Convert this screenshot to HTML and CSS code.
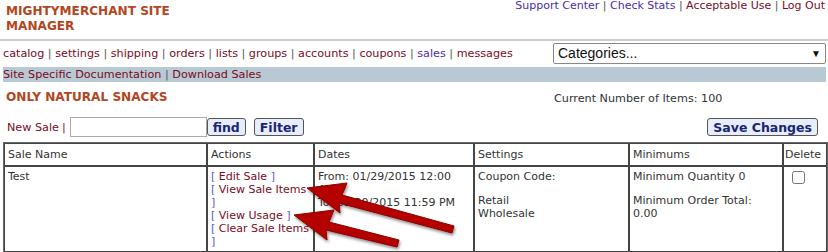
FILE: index.html
```html
<!DOCTYPE html>
<html lang="en">
  <head>
    <meta charset="UTF-8">
    <title>MightyMerchant Site Manager - Sales</title>
    <link rel="stylesheet" href="styles.css">
  </head>
  <body>
    <div class="header">
      <h1 class="site-title">MIGHTYMERCHANT SITE<br>MANAGER</h1>
      <div class="top-links">
        <a href="#" class="visited">Support Center</a> |
        <a href="#" class="visited">Check Stats</a> |
        <a href="#">Acceptable Use</a> |
        <a href="#">Log Out</a>
      </div>
    </div>

    <div class="nav-row">
      <div class="nav">
        <a href="#">catalog</a> | <a href="#">settings</a> | <a href="#">shipping</a> |
        <a href="#">orders</a> | <a href="#">lists</a> | <a href="#">groups</a> |
        <a href="#">accounts</a> | <a href="#">coupons</a> |
        <a href="#" class="visited">sales</a> | <a href="#">messages</a>
      </div>
      <div class="select">
        <span>Categories...</span>
        <span class="caret">&#9660;</span>
      </div>
    </div>

    <div class="doc-bar">
      <a href="#">Site Specific Documentation</a> | <a href="#">Download Sales</a>
    </div>

    <div class="store-row">
      <h2 class="store-name">ONLY NATURAL SNACKS</h2>
      <div class="item-count">Current Number of Items: 100</div>
    </div>

    <div class="toolbar">
      <div class="search">
        <a href="#">New Sale</a> <span class="sep">|</span>
        <input type="text" class="search-input">
        <button class="btn">find</button>
        <button class="btn filter">Filter</button>
      </div>
      <button class="btn">Save Changes</button>
    </div>

    <table class="sales">
      <thead>
        <tr>
          <th class="col-name">Sale Name</th>
          <th class="col-actions">Actions</th>
          <th class="col-dates">Dates</th>
          <th class="col-settings">Settings</th>
          <th class="col-min">Minimums</th>
          <th class="col-del">Delete</th>
        </tr>
      </thead>
      <tbody>
        <tr>
          <td>Test</td>
          <td class="actions">
            [ <a href="#">Edit Sale</a> ]<br>
            [ <a href="#">View Sale Items</a> ]<br>
            [ <a href="#">View Usage</a> ]<br>
            [ <a href="#">Clear Sale Items</a> ]
          </td>
          <td>From: 01/29/2015 12:00 AM<br>To: 01/30/2015 11:59 PM</td>
          <td>
            <p>Coupon Code:</p>
            <p>Retail<br>Wholesale</p>
          </td>
          <td>
            <p>Minimum Quantity 0</p>
            <p>Minimum Order Total: 0.00</p>
          </td>
          <td class="del"><input type="checkbox"></td>
        </tr>
      </tbody>
    </table>

    <!-- annotation arrows drawn over the screenshot -->
    <svg class="arrows" width="828" height="252" viewBox="0 0 828 252">
      <defs>
        <filter id="shadow" x="-20%" y="-20%" width="140%" height="140%">
          <feDropShadow dx="1" dy="2" stdDeviation="1.5" flood-color="#000" flood-opacity="0.45"/>
        </filter>
      </defs>
      <g fill="#b50000" stroke="#8a0000" stroke-width="1" filter="url(#shadow)">
        <path d="M307 188 L347 183 L342 195 L454 226 L452 233 L339 203 L340 213 Z"/>
        <path d="M294 215 L334 210 L329 222 L399 240 L397 247 L326 230 L327 240 Z"/>
      </g>
    </svg>
  </body>
</html>
```

FILE: styles.css
```css
body {
  margin: 0;
  padding: 0 2px 0 3px;
  font-family: "DejaVu Sans", Verdana, sans-serif;
  font-size: 11.2px;
  color: #333;
  background-color: white;
  position: relative;
  height: 252px;
  overflow: hidden;
}
a {
  color: #7a0a1e;
  text-decoration: none;
}
a.visited {
  color: #4b2ca8;
}
.header {
  display: flex;
  justify-content: space-between;
  align-items: flex-start;
  height: 39px;
  border-bottom: 2px solid #ccc;
  margin: 0 -2px 0 -3px;
  padding: 0 3px 0 6px;
}
.site-title {
  margin: 4px 0 0;
  font-size: 12.1px;
  line-height: 15px;
  color: #b3461d;
}
.top-links {
  color: #555;
  font-size: 11px;
  line-height: 12px;
}
.nav-row {
  display: flex;
  justify-content: space-between;
  align-items: center;
  height: 24px;
}
.nav {
  color: #555;
}
.select {
  width: 263px;
  height: 19px;
  border: 1px solid #888;
  border-radius: 2px;
  display: flex;
  justify-content: space-between;
  align-items: center;
  padding: 0 4px;
  font-family: "Liberation Sans", Arial, sans-serif;
  font-size: 14px;
  color: #111;
}
.caret {
  font-size: 10px;
}
.doc-bar {
  background-color: #b8c9d4;
  height: 15px;
  line-height: 15px;
  margin-top: 2px;
  color: #555;
}
.store-row {
  display: flex;
  align-items: flex-start;
  padding: 8px 0 0 3px;
  height: 25px;
}
.store-name {
  margin: 0;
  width: 548px;
  font-size: 12.1px;
  color: #b3461d;
}
.item-count {
  padding-top: 2px;
  color: #333;
}
.toolbar {
  display: flex;
  justify-content: space-between;
  align-items: center;
  padding: 0 8px 2px 4px;
  height: 24px;
}
.search {
  display: flex;
  align-items: center;
}
.sep {
  color: #7a0a1e;
  margin: 0 4px 0 3px;
}
.search-input {
  width: 133px;
  height: 18px;
  border: 1px solid #aaa;
  margin: 0;
  padding: 0 1px;
}
.btn {
  font-family: "DejaVu Sans", Verdana, sans-serif;
  font-size: 12.5px;
  font-weight: bold;
  color: #1c2472;
  background-color: #e6eefc;
  border: 1px solid #555;
  border-radius: 3px;
  padding: 0 5px;
  height: 18px;
  line-height: 15px;
}
.filter {
  margin-left: 8px;
}
.sales {
  width: 823px;
  table-layout: fixed;
  border: 1px solid #666;
  border-spacing: 0;
  margin-top: 1px;
  font-size: 11px;
}
.sales th,
.sales td {
  border: 1px solid #444;
  text-align: left;
  vertical-align: top;
  padding: 3px 3px;
  font-weight: normal;
  line-height: 13px;
  color: #333;
}
.sales th {
  padding: 4px 3px;
}
.sales td p {
  margin: 0 0 11px;
}
.sales td.actions {
  color: #5a5acf;
  padding-right: 0;
}
.col-name { width: 195px; }
.col-actions { width: 99px; }
.col-dates { width: 152px; }
.col-settings { width: 147px; }
.col-min { width: 146px; }
.sales th.col-del {
  width: 40px;
  padding: 4px 1px;
}
.sales td.del {
  padding: 3px 6px;
  height: 74px;
}
.del input {
  margin: 1px 0 0 2px;
  width: 13px;
  height: 13px;
}
.arrows {
  position: absolute;
  left: 0;
  top: 0;
  pointer-events: none;
}
```
